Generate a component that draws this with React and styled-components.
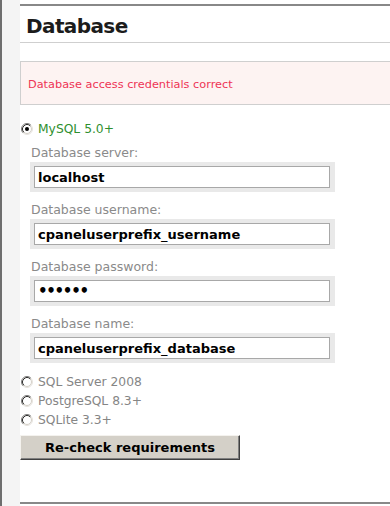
import React from "react";
import styled, { createGlobalStyle } from "styled-components";

const Global = createGlobalStyle`
  html, body { margin: 0; padding: 0; background: #fff; }
  body { font-family: "DejaVu Sans", Verdana, sans-serif; }
`;

const Page = styled.div`
  display: flex;
  width: 390px;
  height: 506px;
  overflow: hidden;
`;

const Sidebar = styled.div`
  flex: 0 0 18px;
  border-left: 2px solid #6e6e6e;
  background: #f4f4f4;
`;

const Main = styled.div`
  flex: 1;
  min-width: 0;
  padding-top: 4px;
  display: flex;
  flex-direction: column;
`;

const Rule = styled.div`
  height: 2px;
  background: #888;
`;

const Heading = styled.h2`
  margin: 0;
  padding: 4px 0 0 6px;
  line-height: 32px;
  font-size: 20px;
  letter-spacing: -0.6px;
  font-weight: bold;
  color: #1c1c1c;
  border-bottom: 1px solid #cfcfcf;
`;

const Notice = styled.div`
  margin-top: 18px;
  height: 44px;
  box-sizing: border-box;
  border: 1px solid #cfcfcf;
  border-right: none;
  background: #fdf3f2;
  color: #ee3355;
  font-size: 11.3px;
  display: flex;
  align-items: center;
  padding: 3px 0 0 7px;
`;

const Option = styled.label`
  display: flex;
  align-items: center;
  height: 19px;
  padding-left: 1px;
  font-size: 12.3px;
  color: ${(p) => (p.$active ? "#2f8f2f" : "#858585")};
  gap: 5px;
`;

const Fields = styled.div`
  padding-left: 10px;
  margin-top: 6px;
  display: flex;
  flex-direction: column;
  gap: 9px;
  margin-bottom: 9px;
`;

const Field = styled.div`
  display: flex;
  flex-direction: column;
`;

const Label = styled.div`
  height: 18px;
  line-height: 18px;
  font-size: 12.5px;
  color: #8a8a8a;
  padding-left: 1px;
`;

const InputWrap = styled.div`
  width: 305px;
  box-sizing: border-box;
  padding: 4px 5px 4px 4px;
  background: #e9e9e9;
`;

const Input = styled.input`
  display: block;
  width: 296px;
  height: 22px;
  box-sizing: border-box;
  margin: 0;
  border: 1px solid #a8a8a8;
  padding: 0 3px;
  background: #fff;
  color: #000;
  font-family: "DejaVu Sans", Verdana, sans-serif;
  font-weight: bold;
  font-size: ${(p) => (p.type === "password" ? "15px" : "13px")};
  letter-spacing: ${(p) => (p.type === "password" ? "-1.3px" : "0")};
  outline: none;
`;

const Button = styled.button`
  margin-top: 6px;
  width: 220px;
  height: 25px;
  box-sizing: border-box;
  background: #d4d0c8;
  border: 1px solid;
  border-color: #f4f2ee #404040 #404040 #f4f2ee;
  box-shadow: inset -1px -1px 0 #808080;
  font-family: "DejaVu Sans", Verdana, sans-serif;
  font-weight: bold;
  font-size: 13px;
  color: #000;
  padding: 0;
`;

const BottomRule = styled(Rule)`
  margin-top: 42px;
`;

const Radio = ({ checked }) => (
  <svg width="12" height="12" viewBox="0 0 12 12" style={{ flex: "0 0 12px" }}>
    <circle cx="6" cy="6" r="5.5" fill="#fff" stroke="#e6e3de" />
    <path d="M2.11 9.89 A5.5 5.5 0 0 1 9.89 2.11" fill="none" stroke="#808080" />
    <circle cx="6" cy="6" r="4.5" fill="none" stroke="#d4d0c8" />
    <path d="M2.82 9.18 A4.5 4.5 0 0 1 9.18 2.82" fill="none" stroke="#303030" />
    {checked && <circle cx="6" cy="6" r="2" fill="#000" />}
  </svg>
);

const fields = [
  { label: "Database server:", value: "localhost" },
  { label: "Database username:", value: "cpaneluserprefix_username" },
  { label: "Database password:", value: "secret", type: "password" },
  { label: "Database name:", value: "cpaneluserprefix_database" },
];

const others = ["SQL Server 2008", "PostgreSQL 8.3+", "SQLite 3.3+"];

export default function App() {
  return (
    <>
      <Global />
      <Page>
        <Sidebar />
        <Main>
          <Rule />
          <Heading>Database</Heading>
          <Notice>Database access credentials correct</Notice>
          <Option $active style={{ marginTop: 14 }}>
            <Radio checked />
            MySQL 5.0+
          </Option>
          <Fields>
            {fields.map((f) => (
              <Field key={f.label}>
                <Label>{f.label}</Label>
                <InputWrap>
                  <Input type={f.type || "text"} defaultValue={f.value} readOnly />
                </InputWrap>
              </Field>
            ))}
          </Fields>
          {others.map((o) => (
            <Option key={o}>
              <Radio />
              {o}
            </Option>
          ))}
          <Button>Re-check requirements</Button>
          <BottomRule />
        </Main>
      </Page>
    </>
  );
}
